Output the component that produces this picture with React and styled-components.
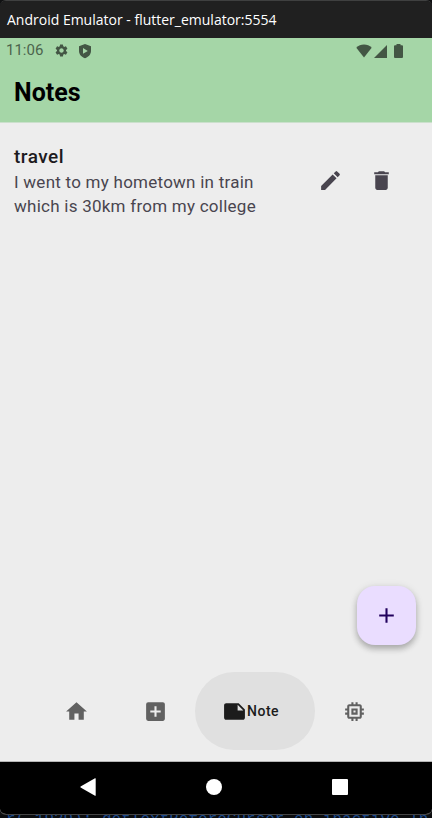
import React from "react";
import styled, { createGlobalStyle } from "styled-components";
import {
  MdSettings,
  MdHome,
  MdAddBox,
  MdNote,
  MdMemory,
  MdEdit,
  MdDelete,
  MdAdd,
} from "react-icons/md";

const GlobalStyle = createGlobalStyle`
  *, *::before, *::after { box-sizing: border-box; }
  html, body, #root { height: 100%; }
  body {
    margin: 0;
    background: #101112;
    font-family: Roboto, "Liberation Sans", sans-serif;
  }
  button {
    border: 0;
    padding: 0;
    margin: 0;
    background: none;
    color: inherit;
    font: inherit;
    cursor: pointer;
  }
  svg { display: block; flex: none; }
`;

const Desktop = styled.div`
  display: flex;
  flex-direction: column;
  height: 100%;
  min-height: 480px;
  overflow: hidden;
`;

const Window = styled.section`
  flex: 1;
  min-height: 0;
  display: flex;
  flex-direction: column;
  border-top: 1px solid #3f4040;
  border-bottom: 1px solid #454545;
  border-radius: 6px;
  overflow: hidden;
`;

const TitleBar = styled.header`
  height: 37px;
  flex: none;
  display: flex;
  align-items: center;
  padding: 0 7px;
  background: #202020;
  color: #ffffff;
  font: 14px/20px "Open Sans", "Noto Sans", sans-serif;
  white-space: nowrap;
`;

const Screen = styled.div`
  flex: 1;
  min-height: 0;
  display: flex;
  flex-direction: column;
  background: #ededed;
`;

const TopArea = styled.header`
  flex: none;
  background: #a5d6a7;
  border-bottom: 1px solid #cbe0cc;
`;

const StatusBar = styled.div`
  height: 25px;
  display: flex;
  align-items: center;
  justify-content: space-between;
  padding: 0 29px 0 6px;
  color: #435644;
`;

const StatusGroup = styled.div`
  display: flex;
  align-items: center;
  gap: ${(p) => p.$gap}px;
`;

const Clock = styled.time`
  margin-right: 2px;
  font-size: 15px;
  line-height: 25px;
  color: #4c644d;
`;

const AppTitle = styled.h1`
  margin: 0;
  padding: 0 14px;
  font-size: 25px;
  line-height: 59px;
  font-weight: 700;
  color: #000000;
`;

const Main = styled.main`
  flex: 1;
  min-height: 0;
  display: flex;
  flex-direction: column;
`;

const NoteList = styled.ul`
  flex: 1;
  min-height: 0;
  margin: 0;
  padding: 20px 0;
  list-style: none;
`;

const NoteRow = styled.li`
  display: flex;
  align-items: center;
  padding: 0 25px 0 14px;
`;

const NoteText = styled.div`
  flex: 1;
  min-width: 0;
  padding-right: 32px;
`;

const NoteTitle = styled.h2`
  margin: 0;
  font-size: 19px;
  line-height: 27px;
  font-weight: 500;
  letter-spacing: 0.5px;
  color: #1d1b20;
`;

const NoteBody = styled.p`
  margin: 0;
  font-size: 17px;
  line-height: 24px;
  letter-spacing: 0.25px;
  color: #49454f;
`;

const RowActions = styled.div`
  display: flex;
  color: #49454f;
`;

const IconButton = styled.button`
  width: 51px;
  height: 48px;
  display: grid;
  place-items: center;
`;

const FabRow = styled.div`
  display: flex;
  justify-content: flex-end;
  padding: 0 16px 16px;
`;

const Fab = styled.button`
  width: 59px;
  height: 59px;
  display: grid;
  place-items: center;
  border-radius: 18px;
  background: #eaddff;
  color: #21005d;
  box-shadow: 0 4px 6px rgba(0, 0, 0, 0.24), 0 1px 8px rgba(0, 0, 0, 0.1);
`;

const TabBar = styled.nav`
  flex: none;
  display: flex;
  justify-content: space-between;
  padding: 11px 39px 11px 37px;
`;

const Tab = styled.button`
  height: 78px;
  display: flex;
  align-items: center;
  padding: ${(p) => (p.$active ? "0 36px 0 27px" : "0 27px")};
  border-radius: 39px;
  background: ${(p) => (p.$active ? "#e0e0e0" : "transparent")};
  color: ${(p) => (p.$active ? "#1c1c1c" : "#616161")};
  font-size: 14px;
  line-height: 20px;
  font-weight: 500;
  letter-spacing: 0.5px;
`;

const SystemNav = styled.nav`
  flex: none;
  height: 53px;
  display: flex;
  align-items: center;
  justify-content: space-around;
  padding: 0 29px 2px 25px;
  background: #000000;
  border-top: 1px solid #b5b5b5;
  color: #ffffff;
`;

const SystemButton = styled.button`
  width: 48px;
  height: 48px;
  display: grid;
  place-items: center;
`;

const Console = styled.pre`
  flex: none;
  height: 3px;
  margin: 0;
  padding-left: 6px;
  overflow: hidden;
  background: #0b0c0e;
  color: #1d4a8c;
  font: 16px/10px "Liberation Mono", monospace;
`;

const ShieldIcon = () => (
  <svg width="14" height="16" viewBox="0 0 14 16" fill="currentColor" aria-hidden="true">
    <path
      fillRule="evenodd"
      d="M7 1L13 3.2V8C13 11.3 10.5 14 7 15.2C3.500 14 1 11.300 1 8V3.200ZM5 5V10.800L9.800 7.900Z"
    />
  </svg>
);

const WifiIcon = () => (
  <svg width="16" height="14" viewBox="0 0 16 14" fill="currentColor" aria-hidden="true">
    <path d="M8 13.500L0.300 3.800C2.400 1.600 5 .5 8 .5s5.600 1.100 7.700 3.300Z" />
  </svg>
);

const SignalIcon = () => (
  <svg width="13" height="14" viewBox="0 0 13 14" fill="currentColor" aria-hidden="true">
    <path d="M0 14L13 1V14Z" />
  </svg>
);

const BatteryIcon = () => (
  <svg width="9" height="14" viewBox="0 0 9 14" fill="currentColor" aria-hidden="true">
    <path d="M2.500 1.300V0H6.500V1.300H8Q9 1.300 9 2.300V13Q9 14 8 14H1Q0 14 0 13V2.300Q0 1.300 1 1.300Z" />
  </svg>
);

const BackIcon = () => (
  <svg width="16" height="18" viewBox="0 0 16 18" fill="currentColor" aria-hidden="true">
    <path d="M15 .3Q15.700 0 15.700 .8V17.200Q15.700 18 15 17.700L.6 9.600Q0 9 .6 8.400Z" />
  </svg>
);

const HomeCircleIcon = () => (
  <svg width="16" height="16" viewBox="0 0 16 16" fill="currentColor" aria-hidden="true">
    <circle cx="8" cy="8" r="8" />
  </svg>
);

const RecentsIcon = () => (
  <svg width="16" height="16" viewBox="0 0 16 16" fill="currentColor" aria-hidden="true">
    <rect width="16" height="16" rx="1" />
  </svg>
);

const notes = [
  {
    title: "travel",
    body: "I went to my hometown in train which is 30km from my college",
  },
];

const tabs = [
  { label: "Home", Icon: MdHome },
  { label: "Add", Icon: MdAddBox },
  { label: "Note", Icon: MdNote, active: true },
  { label: "Memory", Icon: MdMemory },
];

export default function App() {
  return (
    <Desktop>
      <GlobalStyle />
      <Window>
        <TitleBar>Android Emulator - flutter_emulator:5554</TitleBar>
        <Screen>
          <TopArea>
            <StatusBar>
              <StatusGroup $gap={9}>
                <Clock>11:06</Clock>
                <MdSettings size={15} />
                <ShieldIcon />
              </StatusGroup>
              <StatusGroup $gap={2}>
                <WifiIcon />
                <StatusGroup $gap={7}>
                  <SignalIcon />
                  <BatteryIcon />
                </StatusGroup>
              </StatusGroup>
            </StatusBar>
            <AppTitle>Notes</AppTitle>
          </TopArea>
          <Main>
            <NoteList>
              {notes.map((note) => (
                <NoteRow key={note.title}>
                  <NoteText>
                    <NoteTitle>{note.title}</NoteTitle>
                    <NoteBody>{note.body}</NoteBody>
                  </NoteText>
                  <RowActions>
                    <IconButton type="button" aria-label="Edit note">
                      <MdEdit size={25} />
                    </IconButton>
                    <IconButton type="button" aria-label="Delete note">
                      <MdDelete size={25} />
                    </IconButton>
                  </RowActions>
                </NoteRow>
              ))}
            </NoteList>
            <FabRow>
              <Fab type="button" aria-label="New note">
                <MdAdd size={25} />
              </Fab>
            </FabRow>
          </Main>
          <TabBar>
            {tabs.map(({ label, Icon, active }) => (
              <Tab
                key={label}
                type="button"
                $active={active}
                aria-label={label}
                aria-current={active ? "page" : undefined}
              >
                <Icon size={25} />
                {active && label}
              </Tab>
            ))}
          </TabBar>
          <SystemNav>
            <SystemButton type="button" aria-label="Back">
              <BackIcon />
            </SystemButton>
            <SystemButton type="button" aria-label="Home screen">
              <HomeCircleIcon />
            </SystemButton>
            <SystemButton type="button" aria-label="Recent apps">
              <RecentsIcon />
            </SystemButton>
          </SystemNav>
        </Screen>
      </Window>
      <Console>r( 1939): getTextBeforeCursor on inactive In</Console>
    </Desktop>
  );
}
